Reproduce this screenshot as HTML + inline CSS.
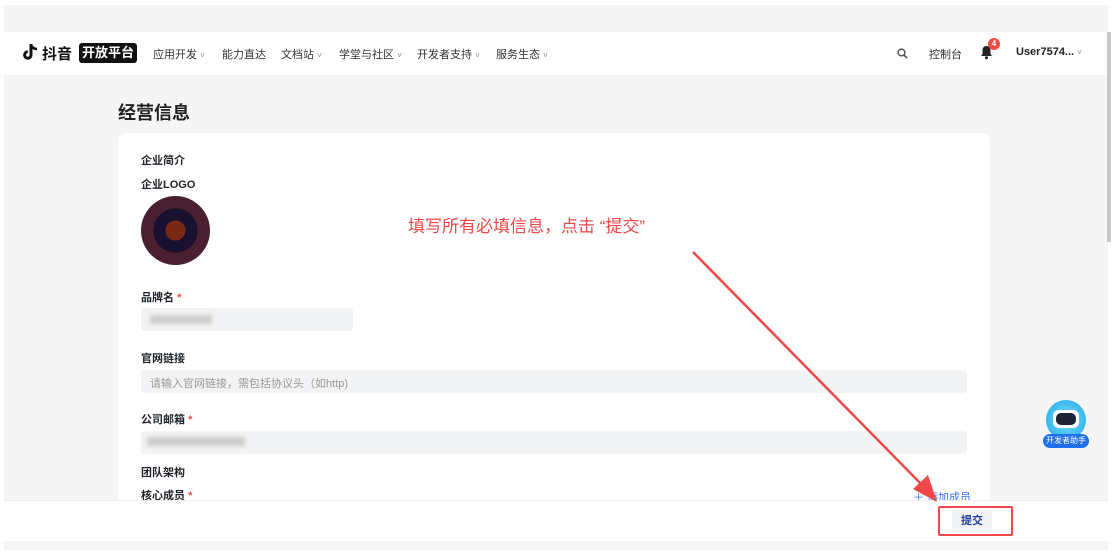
<!DOCTYPE html>
<html><head><meta charset="utf-8"><style>
*{margin:0;padding:0;box-sizing:border-box}
body{width:1112px;height:554px;background:#fff;position:relative;overflow:hidden;font-family:"Liberation Sans","Noto Sans CJK SC",sans-serif;color:#1f2329}
.a{position:absolute}
.lbl{position:absolute;left:141px;font-size:11px;font-weight:bold;color:#1f2329}
.star{color:#f54a45}
.inp{position:absolute;background:#f2f3f5;border-radius:3px}
.nav span{position:absolute;top:46px;font-size:11px;color:#333}
.nav i{font-style:normal;font-size:8px;color:#888}
</style></head><body>
<div class="a" style="left:4px;top:5px;width:1104px;height:545px;background:#f5f5f5"></div>
<div class="a" style="left:4px;top:32px;width:1104px;height:43px;background:#fff"></div>
<svg class="a" style="left:23px;top:43px" width="16" height="18" viewBox="0 0 16 18"><path d="M8 1v11a3.2 3.2 0 1 1-3.2-3.2" fill="none" stroke="#111" stroke-width="3"/><path d="M8 2c1 2.5 3 4 6 4" fill="none" stroke="#111" stroke-width="2.6"/></svg>
<div class="a" style="left:42px;top:43px;font-size:15px;font-weight:bold;color:#111">抖音</div>
<div class="a" style="left:79px;top:43px;width:58px;height:20px;background:#111;border-radius:3px;color:#fff;font-size:13px;font-weight:bold;text-align:center;line-height:20px">开放平台</div>
<div class="nav">
<span style="left:153px">应用开发 <i>˅</i></span><span style="left:222px">能力直达</span><span style="left:281px">文档站 <i>˅</i></span><span style="left:339px">学堂与社区 <i>˅</i></span><span style="left:417px">开发者支持 <i>˅</i></span><span style="left:496px">服务生态 <i>˅</i></span>
<span style="left:929px">控制台</span>
</div>
<svg class="a" style="left:897px;top:48px" width="11" height="11" viewBox="0 0 11 11"><circle cx="4.5" cy="4.5" r="3.4" fill="none" stroke="#555" stroke-width="1.5"/><path d="M7 7l3 3" stroke="#555" stroke-width="1.6"/></svg>
<svg class="a" style="left:980px;top:45px" width="13" height="15" viewBox="0 0 13 15"><path d="M6.5 1C3.8 1 2.5 3 2.5 5.5V9L1 11h11L10.5 9V5.5C10.5 3 9.2 1 6.5 1z" fill="#222"/><circle cx="6.5" cy="12.8" r="1.5" fill="#222"/></svg>
<div class="a" style="left:988px;top:38px;width:12px;height:12px;border-radius:6px;background:#f54a45;color:#fff;font-size:8px;font-weight:bold;text-align:center;line-height:12px">4</div>
<div class="a" style="left:1016px;top:46px;font-size:11px;font-weight:bold;color:#222">User7574... <span style="font-weight:normal;font-size:8px;color:#888">˅</span></div>
<div class="a" style="left:1107px;top:32px;width:4px;height:210px;background:#c8c8c8"></div>

<div class="a" style="left:118px;top:99px;font-size:18px;font-weight:bold;color:#222">经营信息</div>
<div class="a" style="left:118px;top:133px;width:872px;height:380px;background:#fff;border-radius:8px"></div>
<div class="lbl" style="top:152px">企业简介</div>
<div class="lbl" style="top:176px">企业LOGO</div>
<div class="a" style="left:141px;top:196px;width:69px;height:69px;border-radius:50%;background:radial-gradient(circle,#7a2a14 0 20%,#1a1030 21% 45%,#4a2030 46% 70%,#2a1838 71%)"></div>
<div class="lbl" style="top:289px">品牌名 <span class="star">*</span></div>
<div class="inp" style="left:141px;top:308px;width:212px;height:23px"></div>
<div class="a" style="left:150px;top:315px;width:62px;height:9px;background:#ccc;filter:blur(2px)"></div>
<div class="lbl" style="top:350px">官网链接</div>
<div class="inp" style="left:141px;top:370px;width:826px;height:23px"></div>
<div class="a" style="left:150px;top:375px;font-size:11px;color:#999">请输入官网链接，需包括协议头（如http)</div>
<div class="lbl" style="top:411px">公司邮箱 <span class="star">*</span></div>
<div class="inp" style="left:141px;top:431px;width:826px;height:23px"></div>
<div class="a" style="left:147px;top:437px;width:98px;height:9px;background:#ccc;filter:blur(2px)"></div>
<div class="lbl" style="top:464px">团队架构</div>
<div class="lbl" style="top:487px">核心成员 <span class="star">*</span></div>
<div class="a" style="left:913px;top:489px;font-size:11px;color:#3370ff">＋ 添加成员</div>

<div class="a" style="left:4px;top:500px;width:1104px;height:41px;background:#fff;border-top:1px solid #eee"></div>
<div class="a" style="left:952px;top:510px;width:40px;height:22px;background:#f2f3f5;border-radius:3px;color:#1d3e9e;font-size:11px;font-weight:bold;text-align:center;line-height:22px">提交</div>
<div class="a" style="left:938px;top:506px;width:75px;height:30px;border:2px solid #f04848;border-radius:2px"></div>

<div class="a" style="left:1046px;top:400px;width:40px;height:40px;border-radius:50%;background:radial-gradient(circle,#7fe0ff,#1aa4e8)"></div>
<div class="a" style="left:1053px;top:410px;width:26px;height:18px;border-radius:6px;background:#fff"></div>
<div class="a" style="left:1056px;top:413px;width:20px;height:12px;border-radius:5px;background:#1e2433"></div>
<div class="a" style="left:1043px;top:434px;width:46px;height:14px;border-radius:7px;background:#1e6ff0;color:#fff;font-size:8px;text-align:center;line-height:14px">开发者助手</div>

<div class="a" style="left:408px;top:212px;font-size:17px;color:#f04848;white-space:nowrap">填写所有必填信息，点击 “提交”</div>
<svg class="a" style="left:0;top:0" width="1112" height="554"><line x1="693" y1="252" x2="926" y2="489" stroke="#f04848" stroke-width="2.5"/><path d="M937 502L913 489L928 475Z" fill="#f04848"/></svg>
</body></html>
